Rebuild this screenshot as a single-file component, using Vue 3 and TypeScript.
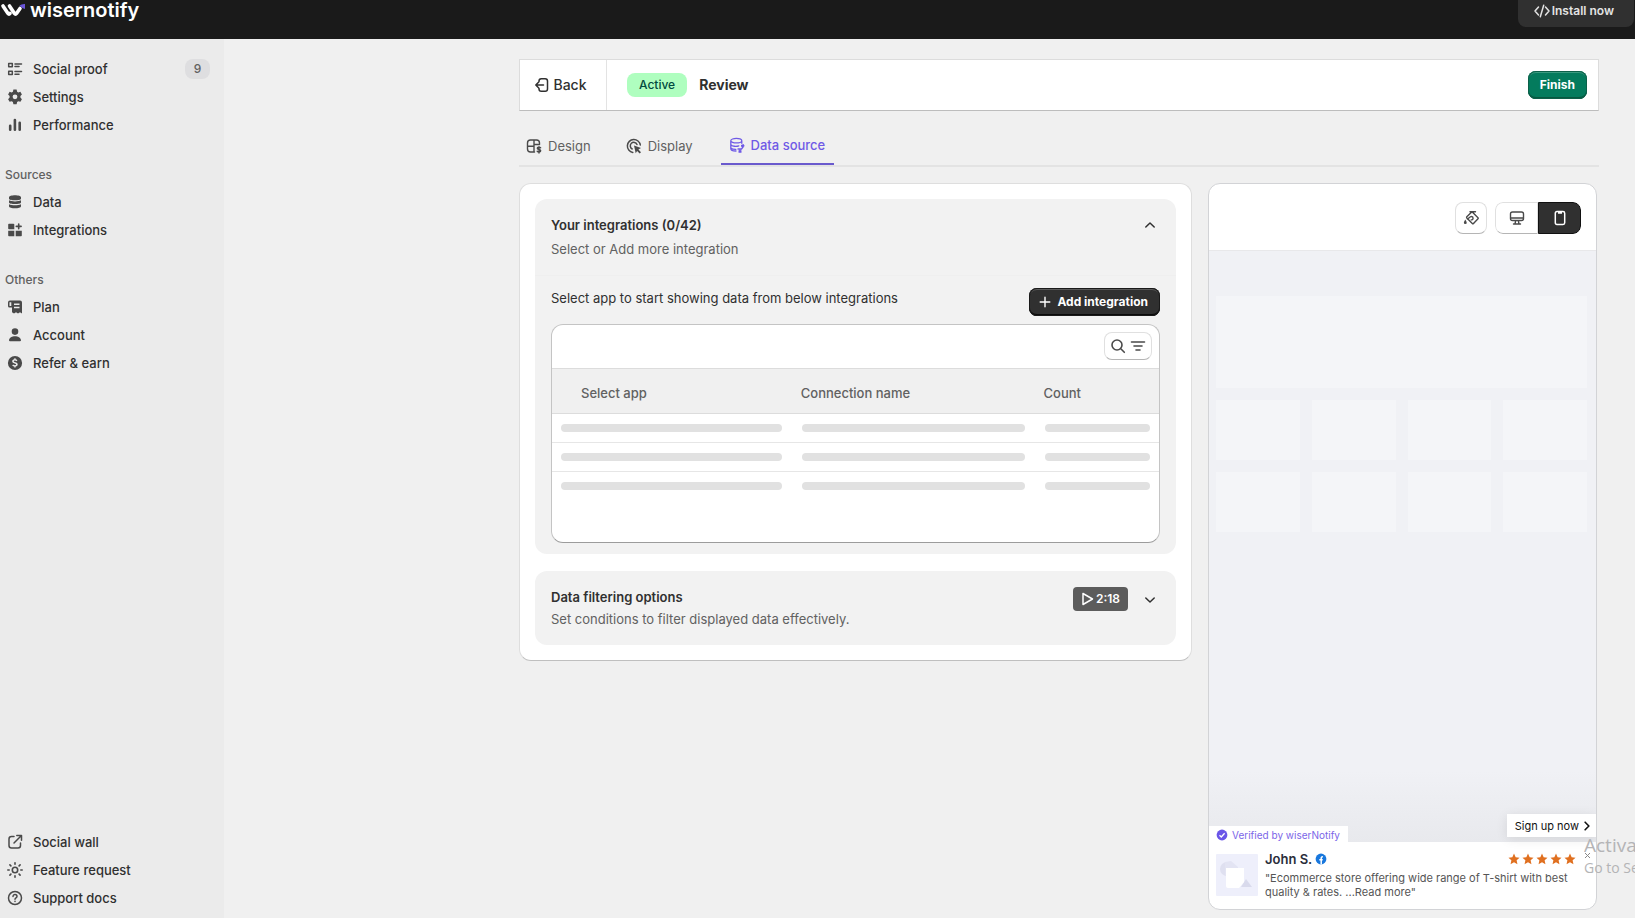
<script setup lang="ts">
import { h, ref, type FunctionalComponent } from 'vue'

interface Glyph {
  fill?: string
  stroke?: string
  width?: number
}

const glyphs: Record<string, Glyph> = {
  list: {
    stroke: 'M1.7 2.6h3.6v3.2H1.7zM1.7 10.2h3.6v3.2H1.7zM8 3h6.5M8 5.6h4M8 10.6h6.5M8 13.2h4',
    width: 1.5,
  },
  gear: {
    fill: 'M6.400 .6h3.200l.5 2.100 1.200.7 2.100-.6 1.500 2.600-1.500 1.600v1.600l1.500 1.600-1.500 2.600-2.100-.6-1.200.7-.5 2.300H6.400l-.5-2.300-1.200-.7-2.100.6-1.500-2.600 1.500-1.600V7L1.100 5.400l1.500-2.600 2.100.6 1.200-.7zM8 5.400a2.400 2.400 0 1 0 0 4.800 2.400 2.400 0 0 0 0-4.800z',
  },
  bars: { stroke: 'M3.200 8.800v4M7.900 3v9.800M12.700 5.800v7', width: 2.6 },
  stack: {
    fill: 'M2 3.300C2 .6 14 .6 14 3.300v1.400c0 2-12 2-12 0zM2 6.300c2.800 1.500 9.200 1.500 12 0v2.300c0 2-12 2-12 0zM2 10.200c2.800 1.500 9.200 1.500 12 0v2.100c0 2.700-12 2.700-12 0z',
  },
  apps: {
    fill: 'M2 1.800h4.500q.8 0 .8.800v4.700H2q-.8 0-.8-.8V2.600q0-.8.8-.8zM1.200 8.700h6.100V14.200H2q-.8 0-.8-.8zM8.700 8.700h6.100v4.700q0 .8-.8.800H8.700z',
    stroke: 'M11.700 2v4.800M9.300 4.400h4.800',
    width: 1.6,
  },
  receipt: {
    fill: 'M3 1.500h10q2 0 2 2v11l-2-1.300-2 1.300-2-1.300-2 1.300-2-1.300V8.500H2.500Q1 8.500 1 7V3.500q0-2 2-2zM2.500 3.300v3.700h1.800V3.300zM7 4.500v1.500h5.500V4.500zM7 7.700v1.500h5.500V7.700z',
  },
  person: { fill: 'M8 1.300a3.300 3.300 0 1 1 0 6.600 3.300 3.300 0 0 1 0-6.600zM2 13.200c.6-5.200 11.400-5.200 12 0q0 1-1 1H3q-1 0-1-1z' },
  coin: {
    fill: 'M8 .9a7.100 7.100 0 1 1 0 14.200A7.100 7.100 0 0 1 8 .9zM7.300 3.300v1c-1.400.2-2.100 1-2.100 2 0 1.300 1 1.800 2.400 2.200 1.200.3 1.500.5 1.500 1 0 .4-.4.700-1.100.7-.8 0-1.400-.3-1.900-.8l-.9 1c.6.6 1.300.9 2.100 1v1.100h1.300v-1.100c1.400-.2 2.100-1 2.100-2 0-1.300-1-1.800-2.400-2.200-1.200-.3-1.500-.5-1.500-.9s.4-.7 1.100-.7c.6 0 1.200.2 1.700.7l.8-1.100a3.600 3.600 0 0 0-1.800-.9v-1z',
  },
  external: { stroke: 'M7 2.500H4.500q-2.500 0-2.500 2.500v6.500q0 2.500 2.500 2.500H11q2.500 0 2.500-2.500V9M9.800 1.500h4.700v4.700M14.200 1.800 7 9' },
  sun: {
    stroke: 'M8 5.300a2.700 2.700 0 1 1 0 5.400 2.700 2.700 0 0 1 0-5.400M8 .8v1.400M8 13.800v1.400M.8 8h1.400M13.800 8h1.400M2.900 2.900l1 1M12.100 12.100l1 1M2.900 13.100l1-1M12.100 3.900l1-1',
    width: 1.6,
  },
  help: { stroke: 'M8 1.500a6.500 6.500 0 1 1 0 13 6.500 6.500 0 0 1 0-13M6 6.500c0-2.600 4-2.500 4 0 0 1.500-2 1.400-2 2.800M8 11.200v.3' },
  exit: { stroke: 'M5 4.800V4q0-2.300 2.300-2.300h3.900q2.300 0 2.300 2.300v8q0 2.300-2.300 2.300H7.300Q5 14.300 5 12v-.8M9.500 8H2M4.500 5.300 1.800 8l2.700 2.700' },
  design: {
    stroke: 'M8.500 14H4.500q-3 0-3-3V5q0-3 3-3h6q3 0 3 3v1.500M8 2v12M1.500 8.300H8M8 6.500h5.500M14.600 9.700c-1-.9-3.300-.7-3.300.6 0 1.600 3.400.9 3.400 2.500 0 1.400-2.500 1.500-3.500.5M13 8.700v6.300',
    width: 1.4,
  },
  target: {
    fill: 'M8 7.500l7 2.600-2.600 1.500 2.600 2.600-1.300 1.300-2.600-2.600-1.400 2.400z',
    stroke: 'M14.300 7A6.500 6.500 0 1 0 6.800 14.400M11 6.500a3.500 3.500 0 1 0-4.800 4.500',
  },
  source: {
    stroke: 'M1.800 3.700c0-3 11-3 11 0s-11 3-11 0v8c0 1.500 2.500 2.300 5.200 2.300M12.800 3.700v2.600M1.800 7.500c1 2 5.700 2.200 8 1.300M1.800 10.800c1 1.300 3 1.600 5 1.600M9 12h3.500l1.500-2M11 14.500v-2.300',
    fill: 'M12 8l2.500-1 1.200 2-2 1.500-1.700-1zM9.500 13.300h3v2.500h-3z',
    width: 1.3,
  },
  up: { stroke: 'M3.800 10 8 6l4.200 4', width: 1.5 },
  down: { stroke: 'M3.800 6 8 10l4.200-4', width: 1.5 },
  plus: { stroke: 'M8 3.200v9.600M3.200 8h9.600', width: 1.4 },
  search: { stroke: 'M7 2a5 5 0 1 1 0 10A5 5 0 0 1 7 2M10.800 10.800 14.300 14.300', width: 1.6 },
  filter: { stroke: 'M1.500 4h13M4 8h8M6 12h4', width: 1.6 },
  paint: {
    fill: 'M2.300 9.500q2.900 4.500 0 4.500t0-4.500z',
    stroke: 'M7 1.700h5.500M9 1.700l6 6q.5.500 0 1L10.500 13.500q-.6.600-1.200 0L3.800 8q-.5-.6 0-1.200zM4.500 9l3-2.300M8.500 6.500a1.700 1.700 0 1 1-.3 3.400',
    width: 1.4,
  },
  desktop: { stroke: 'M3.500 2h9q2 0 2 2v4.500q0 2-2 2h-9q-2 0-2-2V4q0-2 2-2zM1.500 8h13M6.700 10.500 6 13.800M9.300 10.500l.7 3.300M4.500 14h7', width: 1.4 },
  mobile: {
    fill: 'M6 2h4v1.800H6z',
    stroke: 'M5 1.500h6q1.700 0 1.700 1.700v9.600q0 1.700-1.700 1.700H5q-1.700 0-1.700-1.700V3.200q0-1.700 1.700-1.700z',
    width: 1.5,
  },
  play: { stroke: 'M4 2.500v11L13.500 8z' },
  code: { stroke: 'M4.500 4 1 8l3.500 4M11.500 4 15 8l-3.500 4M9.700 2.300 6.300 13.700' },
  arrow: { stroke: 'M5.500 3l5 5-5 5', width: 2.2 },
  star: { fill: 'M8 .7l2.200 4.900 5.200.6-3.900 3.500 1.100 5.300L8 12.300 3.400 15l1.100-5.300L.6 6.200l5.200-.6z' },
}

const Icon: FunctionalComponent<{ name: string; size?: number }> = (props) => {
  const g = glyphs[props.name]
  const size = props.size ?? 16
  return h('svg', { width: size, height: size, viewBox: '0 0 16 16', 'aria-hidden': 'true' }, [
    g.fill ? h('path', { d: g.fill, fill: 'currentColor', 'fill-rule': 'evenodd' }) : null,
    g.stroke
      ? h('path', {
          d: g.stroke,
          fill: 'none',
          stroke: 'currentColor',
          'stroke-width': g.width ?? 1.5,
          'stroke-linecap': 'round',
          'stroke-linejoin': 'round',
        })
      : null,
  ])
}
Icon.props = ['name', 'size']

interface NavItem {
  label: string
  icon: string
  count?: number
}

const groups: { title?: string; items: NavItem[] }[] = [
  {
    items: [
      { label: 'Social proof', icon: 'list', count: 9 },
      { label: 'Settings', icon: 'gear' },
      { label: 'Performance', icon: 'bars' },
    ],
  },
  {
    title: 'Sources',
    items: [
      { label: 'Data', icon: 'stack' },
      { label: 'Integrations', icon: 'apps' },
    ],
  },
  {
    title: 'Others',
    items: [
      { label: 'Plan', icon: 'receipt' },
      { label: 'Account', icon: 'person' },
      { label: 'Refer & earn', icon: 'coin' },
    ],
  },
]

const footerItems: NavItem[] = [
  { label: 'Social wall', icon: 'external' },
  { label: 'Feature request', icon: 'sun' },
  { label: 'Support docs', icon: 'help' },
]

const tabs = [
  { label: 'Design', icon: 'design' },
  { label: 'Display', icon: 'target' },
  { label: 'Data source', icon: 'source' },
]
const activeTab = ref('Data source')
const device = ref<'desktop' | 'mobile'>('mobile')
const columns = ['Select app', 'Connection name', 'Count']
</script>

<template>
  <div class="app">
    <header class="header">
      <a href="#" class="brand">
        <svg width="26" height="20" viewBox="0 0 26 20" aria-hidden="true">
          <path d="M3 6 8 13.500q1 1.300 2 0M9.500 6l5 7.500q1 1.300 2 0L20 8.500" fill="none" stroke="#fff" stroke-width="3.600" stroke-linecap="round" stroke-linejoin="round" />
          <path d="M19.500 5.500q2-1.700 5.500-1.500v5q-3-.5-5.500-3.500z" fill="#6a55d8" />
        </svg>
        <span>wisernotify</span>
      </a>
      <button type="button" class="install"><Icon name="code" />Install now</button>
    </header>

    <div class="body">
      <aside class="sidebar">
        <nav aria-label="Main">
          <section v-for="(group, i) in groups" :key="i" class="group">
            <h2 v-if="group.title" class="group-title">{{ group.title }}</h2>
            <a v-for="item in group.items" :key="item.label" href="#" class="nav-item">
              <Icon :name="item.icon" />
              <span>{{ item.label }}</span>
              <span v-if="item.count" class="count">{{ item.count }}</span>
            </a>
          </section>
        </nav>
        <nav aria-label="Help">
          <a v-for="item in footerItems" :key="item.label" href="#" class="nav-item">
            <Icon :name="item.icon" />
            <span>{{ item.label }}</span>
          </a>
        </nav>
      </aside>

      <main class="main">
        <div class="topbar">
          <button type="button" class="back"><Icon name="exit" />Back</button>
          <span class="badge">Active</span>
          <h1 class="title">Review</h1>
          <button type="button" class="finish">Finish</button>
        </div>

        <div class="tabs" role="tablist">
          <button
            v-for="tab in tabs"
            :key="tab.label"
            type="button"
            role="tab"
            class="tab"
            :class="{ active: activeTab === tab.label }"
            :aria-selected="activeTab === tab.label"
            @click="activeTab = tab.label"
          >
            <Icon :name="tab.icon" />{{ tab.label }}
          </button>
        </div>

        <div class="columns">
          <section class="card">
            <div class="panel">
              <div class="panel-head">
                <div>
                  <h3>Your integrations (0/42)</h3>
                  <p>Select or Add more integration</p>
                </div>
                <button type="button" class="toggle" aria-label="Collapse"><Icon name="up" /></button>
              </div>
              <div class="panel-body">
                <div class="intro">
                  <p>Select app to start showing data from below integrations</p>
                  <button type="button" class="add"><Icon name="plus" />Add integration</button>
                </div>
                <div class="table-box">
                  <div class="table-tools">
                    <button type="button" class="find" aria-label="Search and filter">
                      <Icon name="search" /><Icon name="filter" />
                    </button>
                  </div>
                  <table>
                    <colgroup>
                      <col class="col-app" />
                      <col class="col-name" />
                      <col />
                    </colgroup>
                    <thead>
                      <tr>
                        <th v-for="column in columns" :key="column" scope="col">{{ column }}</th>
                      </tr>
                    </thead>
                    <tbody>
                      <tr v-for="row in 3" :key="row">
                        <td v-for="column in columns" :key="column"><div class="bar"></div></td>
                      </tr>
                    </tbody>
                  </table>
                </div>
              </div>
            </div>

            <div class="panel filtering">
              <div>
                <h3>Data filtering options</h3>
                <p>Set conditions to filter displayed data effectively.</p>
              </div>
              <button type="button" class="video"><Icon name="play" />2:18</button>
              <button type="button" class="toggle" aria-label="Expand"><Icon name="down" /></button>
            </div>
          </section>

          <section class="preview">
            <div class="preview-tools">
              <button type="button" class="tool" aria-label="Theme"><Icon name="paint" /></button>
              <div class="devices">
                <button type="button" :class="{ on: device === 'desktop' }" aria-label="Desktop" @click="device = 'desktop'">
                  <Icon name="desktop" />
                </button>
                <button type="button" :class="{ on: device === 'mobile' }" aria-label="Mobile" @click="device = 'mobile'">
                  <Icon name="mobile" />
                </button>
              </div>
            </div>
            <div class="stage">
              <div class="blocks">
                <div class="hero"></div>
                <div v-for="n in 8" :key="n" class="block"></div>
              </div>
              <div class="stage-foot">
                <a href="#" class="verified">
                  <svg width="12" height="12" viewBox="0 0 12 12" aria-hidden="true">
                    <circle cx="6" cy="6" r="5.400" fill="#6a55e8" />
                    <path d="M3.500 6.200 5.300 8l3.300-3.700" fill="none" stroke="#fff" stroke-width="1.300" />
                  </svg>
                  Verified by wiserNotify
                </a>
                <button type="button" class="signup">Sign up now<Icon name="arrow" :size="12" /></button>
              </div>
            </div>
            <article class="review">
              <svg class="thumb" width="42" height="42" viewBox="0 0 42 42" aria-hidden="true">
                <rect width="42" height="42" rx="1" fill="#eeeffb" />
                <circle cx="11" cy="15" r="7" fill="#dfe0f0" />
                <path d="M9 8l6-1 7 6v8H9z" fill="#e3e4f3" />
                <path d="M25 33l5-8 6 8z" fill="#d9daec" />
                <path d="M10 14h18v14l-5 6H12q-2 0-2-2z" fill="#fff" />
              </svg>
              <div class="review-text">
                <div class="reviewer">
                  <strong>John S.</strong>
                  <svg width="12" height="12" viewBox="0 0 12 12" aria-hidden="true">
                    <circle cx="6" cy="6" r="5.400" fill="#1877dd" />
                    <path d="M6.200 11.400V5.200q0-1.500 1.700-1.400M4.300 6.700h3.400" fill="none" stroke="#fff" stroke-width="1.500" />
                  </svg>
                  <span class="stars" role="img" aria-label="5 stars">
                    <Icon v-for="n in 5" :key="n" name="star" :size="12" />
                  </span>
                </div>
                <p>"Ecommerce store offering wide range of T-shirt with best quality &amp; rates. ...Read more"</p>
              </div>
              <button type="button" class="dismiss" aria-label="Close">
                <svg width="7" height="7" viewBox="0 0 7 7" aria-hidden="true">
                  <path d="M1 1l5 5M6 1 1 6" stroke="currentColor" stroke-width="1" />
                </svg>
              </button>
            </article>
          </section>
        </div>
      </main>
    </div>

    <div class="watermark">
      <div class="watermark-title">Activa</div>
      <div>Go to Se</div>
    </div>
  </div>
</template>

<style>
html,
body {
  background: #f0f0f0;
}
</style>

<style scoped>
.app {
  position: relative;
  display: flex;
  flex-direction: column;
  min-height: 100vh;
  overflow: hidden;
  font-family: Inter, 'Liberation Sans', sans-serif;
  font-size: 13px;
  line-height: 20px;
  color: #303030;
}
.app * {
  box-sizing: border-box;
}
h1,
h2,
h3,
p {
  margin: 0;
  font-size: inherit;
}
button {
  display: flex;
  align-items: center;
  justify-content: center;
  margin: 0;
  padding: 0;
  border: 0;
  background: none;
  font: inherit;
  color: inherit;
  cursor: pointer;
}
a {
  color: inherit;
  text-decoration: none;
}
svg {
  display: block;
  flex: none;
}

.header {
  display: flex;
  justify-content: space-between;
  align-items: flex-start;
  height: 39px;
  padding-right: 1px;
  background: #1a1a1a;
  color: #fff;
}
.brand {
  display: flex;
  gap: 4px;
  font-size: 20px;
  font-weight: 600;
}
.install {
  height: 27px;
  padding: 0 20px 6px 16px;
  gap: 2px;
  border-radius: 0 0 8px 8px;
  background: #303030;
  color: #e3e3e3;
  font-size: 12px;
  font-weight: 600;
}

.body {
  flex: 1;
  display: flex;
}
.sidebar {
  flex: none;
  width: 224px;
  display: flex;
  flex-direction: column;
  justify-content: space-between;
  padding: 16px 14px 6px 5px;
  background: #ebebeb;
}
.group {
  margin-bottom: 26px;
}
.group-title {
  padding-bottom: 3px;
  line-height: 20px;
  font-size: 12px;
  font-weight: 500;
  color: #616161;
}
.nav-item {
  display: flex;
  align-items: center;
  height: 28px;
  padding-left: 2px;
  gap: 10px;
  font-weight: 550;
}
.nav-item svg {
  color: #4a4a4a;
}
.count {
  margin-left: auto;
  width: 25px;
  border-radius: 8px;
  background: #dedee0;
  text-align: center;
  font-size: 12px;
  color: #616161;
}

.main {
  flex: 1;
  min-width: 0;
  padding: 20px 36px 8px 295px;
  display: flex;
  flex-direction: column;
}
.topbar {
  display: flex;
  align-items: center;
  height: 52px;
  padding-right: 11px;
  border: 1px solid #dcdcdc;
  border-bottom: 1px solid #bdbdbd;
  background: #fff;
}
.back {
  align-self: stretch;
  width: 87px;
  padding-right: 5px;
  gap: 3px;
  border-right: 1px solid #e3e3e3;
  font-size: 14px;
  font-weight: 500;
}
.badge {
  margin-left: 20px;
  padding: 2px 12px;
  border-radius: 8px;
  background: #affebf;
  color: #014b40;
  font-size: 12px;
  font-weight: 550;
}
.title {
  margin-left: 12px;
  font-size: 14px;
  font-weight: 650;
}
.finish {
  margin-left: auto;
  height: 28px;
  padding: 0 12px;
  border-radius: 8px;
  background: #047b5d;
  box-shadow: inset 0 0 0 1px #0c6049, inset 0 -2px 0 #07573f, inset 0 2px 0 #3a9a80;
  color: #fff;
  font-weight: 650;
  font-size: 12px;
}

.tabs {
  display: flex;
  gap: 20px;
  margin-top: 14px;
  height: 42px;
  border-bottom: 2px solid #e3e3e3;
}
.tab {
  padding: 4px 8px 0 7px;
  gap: 6px;
  height: 40px;
  border-bottom: 2px solid transparent;
  color: #616161;
}
.tab svg {
  color: #4a4a4a;
}
.tab.active {
  padding: 2px 9px 0 8px;
  border-bottom-color: #6a5acd;
  color: #6f5ae6;
  font-weight: 500;
}
.tab.active svg {
  color: inherit;
}

.columns {
  flex: 1;
  display: grid;
  grid-template-columns: minmax(0, 1fr) 389px;
  gap: 16px;
  align-items: stretch;
  padding-right: 2px;
  margin-top: 16px;
}
.card {
  align-self: start;
  display: grid;
  gap: 17px;
  padding: 15px;
  border: 1px solid #dedede;
  border-bottom-color: #bfbfbf;
  border-radius: 12px;
  background: #fff;
}
.panel {
  border-radius: 12px;
  background: #f2f2f2;
}
.panel h3 {
  font-weight: 600;
}
.panel-head {
  display: flex;
  justify-content: space-between;
  align-items: flex-start;
  padding: 16px 18px 16px 16px;
  border-bottom: 1px solid #efefef;
}
.panel-head p,
.filtering p {
  margin-top: 4px;
  color: #616161;
}
.toggle {
  width: 16px;
  height: 20px;
}
.panel-body {
  padding: 12px 16px 11px;
}
.intro {
  display: flex;
  justify-content: space-between;
  align-items: flex-start;
}
.add {
  height: 28px;
  padding: 0 12px 0 8px;
  gap: 4px;
  border-radius: 8px;
  background: #303030;
  box-shadow: inset 0 0 0 1px #1a1a1a, inset 0 -2px 0 #0a0a0a, inset 0 2px 0 #5a5a5a;
  color: #fff;
  font-size: 12px;
  font-weight: 650;
}
.table-box {
  margin-top: 8px;
  padding-bottom: 41px;
  border: 1px solid #c4c4c4;
  border-bottom-color: #9c9c9c;
  border-radius: 12px;
  background: #fff;
}
.table-tools {
  display: flex;
  justify-content: flex-end;
  padding: 7px 7px 8px;
}
.find {
  width: 48px;
  height: 28px;
  gap: 4px;
  border: 1px solid #e0e0e0;
  border-bottom-color: #b5b5b5;
  border-radius: 8px;
  color: #4a4a4a;
}
table {
  width: 100%;
  table-layout: fixed;
  border-collapse: collapse;
}
.col-app {
  width: 39.5%;
}
.col-name {
  width: 40%;
}
th {
  height: 45px;
  padding: 4px 0 0 9px;
  border-top: 1px solid #dcdcdc;
  border-bottom: 1px solid #dcdcdc;
  background: #f0f0f0;
  text-align: left;
  font-weight: 550;
  color: #616161;
}
th:first-child {
  padding-left: 29px;
}
td {
  height: 29px;
  padding: 0 10px;
}
td:first-child {
  padding-left: 9px;
}
td:last-child {
  padding-right: 9px;
}
tbody tr + tr {
  border-top: 1px solid #e6e6e6;
}
.bar {
  height: 8px;
  border-radius: 4px;
  background: #e1e1e1;
}
.filtering {
  display: flex;
  align-items: flex-start;
  padding: 16px 18px 16px 16px;
}
.filtering p {
  margin-top: 2px;
}
.video {
  margin-left: auto;
  margin-right: 14px;
  height: 24px;
  padding: 0 8px 0 6px;
  gap: 1px;
  border-radius: 4px;
  background: #5c5c5c;
  color: #fff;
  font-size: 12px;
  font-weight: 600;
}
.filtering .toggle {
  height: 26px;
}

.preview {
  display: flex;
  flex-direction: column;
  border: 1px solid #d2d3d6;
  border-radius: 12px;
  background: #fff;
  overflow: hidden;
}
.preview-tools {
  display: flex;
  justify-content: flex-end;
  gap: 8px;
  padding: 18px 15px 16px;
  border-bottom: 1px solid #e8e8ea;
}
.tool {
  width: 32px;
  height: 32px;
  border: 1px solid #e0e0e0;
  border-bottom-color: #b5b5b5;
  border-radius: 8px;
  color: #4a4a4a;
}
.devices {
  display: flex;
  height: 32px;
  border-radius: 8px;
  overflow: hidden;
}
.devices button {
  width: 43px;
  border: 1px solid #e0e0e0;
  border-bottom-color: #b5b5b5;
  border-radius: 8px 0 0 8px;
  color: #4a4a4a;
}
.devices button + button {
  border-radius: 0 8px 8px 0;
}
.devices .on {
  border-color: #111;
  background: #303030;
  color: #fff;
}
.stage {
  flex: 1;
  display: flex;
  flex-direction: column;
  justify-content: space-between;
  background: linear-gradient(#f0f1f5 88%, #e8e9ed);
}
.blocks {
  display: grid;
  grid-template-columns: repeat(4, 1fr);
  grid-template-rows: 92px;
  grid-auto-rows: 60px;
  column-gap: 12px;
  row-gap: 12px;
  padding: 45px 9px 0 7px;
}
.hero {
  grid-column: 1 / -1;
  background: #f4f5f8;
}
.block {
  background: #f4f5f8;
}
.stage-foot {
  display: flex;
  justify-content: space-between;
  align-items: flex-end;
}
.verified {
  display: flex;
  align-items: center;
  gap: 4px;
  height: 16px;
  padding: 2px 8px 0 7px;
  background: #fff;
  color: #7b66e8;
  font-size: 10px;
}
.signup {
  height: 23px;
  margin-bottom: 5px;
  padding: 0 3px 0 8px;
  gap: 2px;
  background: #fff;
  box-shadow: 0 2px 12px #00000018;
  color: #111;
  font-size: 11px;
}
.review {
  display: flex;
  gap: 7px;
  padding: 7px 4px 10px 7px;
}
.thumb {
  margin-top: 5px;
}
.review-text {
  flex: 1;
}
.reviewer {
  display: flex;
  align-items: center;
  gap: 3px;
}
.reviewer strong {
  font-weight: 600;
  color: #2a2d3a;
}
.stars {
  display: flex;
  gap: 2px;
  margin-left: auto;
  color: #e07020;
}
.review p {
  margin-top: 2px;
  font-size: 11px;
  line-height: 14px;
  color: #555;
}
.dismiss {
  align-self: flex-start;
  width: 9px;
  height: 12px;
  color: #888;
}

.watermark {
  position: absolute;
  right: 0;
  bottom: 40px;
  width: 51px;
  overflow: hidden;
  white-space: nowrap;
  font-family: 'Open Sans', 'Noto Sans', sans-serif;
  font-size: 14px;
  line-height: 20px;
  color: #b4b4b6;
  pointer-events: none;
}
.watermark-title {
  font-size: 19px;
  line-height: 26px;
}
</style>
